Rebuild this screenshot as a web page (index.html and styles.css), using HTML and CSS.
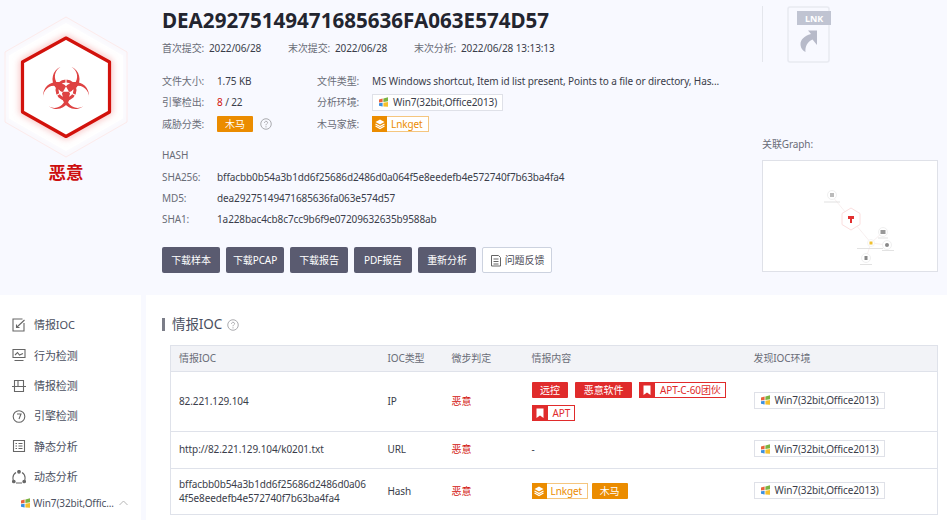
FILE: index.html
```html
<!DOCTYPE html>
<html lang="zh-CN">
<head>
<meta charset="utf-8">
<title>恶意文件分析报告</title>
<link rel="stylesheet" href="styles.css">
</head>
<body>
<svg class="defs" width="0" height="0" aria-hidden="true">
  <defs>
    <g id="win">
      <path d="M1 3.5 4.600 2.600 4.600 6 1 6.600Z" fill="#e8643c"/>
      <path d="M5.400 2.400 10 1.200 10 5.200 5.400 5.900Z" fill="#7cb342"/>
      <path d="M1 7.300 4.600 6.800 4.600 10.400 1 9.800Z" fill="#3b8fe0"/>
      <path d="M5.400 6.700 10 6.100 10 10.800 5.400 10.500Z" fill="#f5c02c"/>
    </g>
    <g id="stack">
      <path d="M6 1.500 10.500 4 6 6.500 1.500 4Z" fill="#fff"/>
      <path d="M1.500 6 6 8.500 10.500 6M1.500 8 6 10.500 10.500 8" fill="none" stroke="#fff" stroke-width="1.100"/>
    </g>
    <path id="flag" d="M2.500 1.500H9.500V11L6 8.600 2.500 11Z" fill="#fff"/>
    <g id="help">
      <circle cx="6.500" cy="6.500" r="5.700" fill="none" stroke="#a4a4a8" stroke-width="1"/>
      <path d="M4.900 5.200C4.900 3 8.200 3 8.200 5.100 8.200 6.300 6.500 6.300 6.500 7.900" fill="none" stroke="#a4a4a8" stroke-width="1"/>
      <circle cx="6.500" cy="9.600" r=".7" fill="#a4a4a8"/>
    </g>
  </defs>
</svg>

<section class="hero">
  <div class="verdict">
    <svg class="verdict-mark" width="132" height="160" viewBox="0 0 132 160" aria-hidden="true">
      <defs>
        <filter id="glow" x="-30%" y="-30%" width="160%" height="160%">
          <feGaussianBlur stdDeviation="3.500"/>
        </filter>
        <filter id="soft" x="-30%" y="-30%" width="160%" height="160%">
          <feGaussianBlur stdDeviation="3"/>
        </filter>
        <path id="lobe" d="M-5.300 -23.300A13.500 13.500 0 1 0 5.300 -23.300A11.100 11.100 0 1 1 -5.300 -23.300Z"/>
      </defs>
      <path d="M66 17 127 52V122L66 157 5 122V52Z" fill="#f9f8fd" stroke="#fdeaea" stroke-width="1" stroke-linejoin="round"/>
      <path d="M66 24 122 56V118L66 150 10 118V56Z" fill="#fff" stroke="#fff" stroke-width="2" stroke-linejoin="round" filter="url(#soft)"/>
      <path d="M66 24 122 56V118L66 150 10 118V56Z" fill="#fff" stroke="#fff" stroke-width="2" stroke-linejoin="round"/>
      <path d="M66 38 109.500 62V112L66 136.500 22.500 112V62Z" fill="none" stroke="#f4a3a3" stroke-width="4" stroke-linejoin="round" filter="url(#glow)"/>
      <path d="M66 38 109.500 62V112L66 136.500 22.500 112V62Z" fill="#fff" stroke="#d2120c" stroke-width="3.200" stroke-linejoin="round"/>
      <g transform="translate(66 90)" fill="#de4242">
        <use href="#lobe"/>
        <use href="#lobe" transform="rotate(120)"/>
        <use href="#lobe" transform="rotate(240)"/>
        <g fill="#fff">
          <circle cy="-14.500" r="9.300"/>
          <circle cy="-14.500" r="9.300" transform="rotate(120)"/>
          <circle cy="-14.500" r="9.300" transform="rotate(240)"/>
        </g>
        <circle r="9" fill="none" stroke="#de4242" stroke-width="3"/>
        <path d="M0 2V14M-1.700 -1-12.100 -7M1.700 -1 12.100 -7" stroke="#de4242" stroke-width="3.600"/>
        <path d="M0 -3.500 3 1.800H-3Z" fill="#fff"/>
        <path d="M0 -4V-12M3.500 2 10.400 6M-3.500 2-10.400 6" stroke="#fff" stroke-width="1.100"/>
      </g>
    </svg>
    <div class="verdict-label">恶意</div>
  </div>

  <div class="info">
    <h1 class="title">DEA29275149471685636FA063E574D57</h1>
    <div class="dates">
      <span class="date date-a"><span class="label">首次提交:</span><span>2022/06/28</span></span>
      <span class="date date-b"><span class="label">末次提交:</span><span>2022/06/28</span></span>
      <span class="date"><span class="label">末次分析:</span><span>2022/06/28 13:13:13</span></span>
    </div>
    <div class="facts">
      <div class="fact-row">
        <div class="fact-left"><span class="key">文件大小:</span><span>1.75 KB</span></div>
        <div class="fact-right"><span class="key">文件类型:</span><span>MS Windows shortcut, Item id list present, Points to a file or directory, Has...</span></div>
      </div>
      <div class="fact-row">
        <div class="fact-left"><span class="key">引擎检出:</span><span><span class="hit">8</span> / 22</span></div>
        <div class="fact-right"><span class="key">分析环境:</span><span class="env"><svg width="11" height="12" viewBox="0 0 11 12"><use href="#win"/></svg>Win7(32bit,Office2013)</span></div>
      </div>
      <div class="fact-row">
        <div class="fact-left"><span class="key">威胁分类:</span><span class="tag tag-orange tag-wide">木马</span><svg class="help-icon" width="12" height="12" viewBox="0 0 13 13"><use href="#help"/></svg></div>
        <div class="fact-right"><span class="key">木马家族:</span><span class="family"><span class="family-icon"><svg width="12" height="12" viewBox="0 0 12 12"><use href="#stack"/></svg></span><span class="family-name">Lnkget</span></span></div>
      </div>
    </div>
    <div class="hash-block">
      <div class="hash-title">HASH</div>
      <div class="hash-row"><span class="hash-key">SHA256:</span><span>bffacbb0b54a3b1dd6f25686d2486d0a064f5e8eedefb4e572740f7b63ba4fa4</span></div>
      <div class="hash-row"><span class="hash-key">MD5:</span><span>dea29275149471685636fa063e574d57</span></div>
      <div class="hash-row"><span class="hash-key">SHA1:</span><span>1a228bac4cb8c7cc9b6f9e07209632635b9588ab</span></div>
    </div>
    <div class="actions">
      <button class="btn">下载样本</button>
      <button class="btn">下载PCAP</button>
      <button class="btn">下载报告</button>
      <button class="btn">PDF报告</button>
      <button class="btn">重新分析</button>
      <button class="btn btn-light">
        <svg width="12" height="13" viewBox="0 0 12 13" fill="none" stroke="#666"><path d="M1.500 1.500H8.500L10.500 3.500V12H1.500Z"/><path d="M3.500 5H8.500M3.500 7.500H8.500M3.500 10H8.500"/></svg>问题反馈
      </button>
    </div>
  </div>

  <aside class="side">
    <div class="file-box">
      <svg width="46" height="57" viewBox="0 0 46 57" aria-hidden="true">
        <rect x="1" y="1" width="41" height="55" rx="2" fill="none" stroke="#e8eaf1" stroke-width="1.500"/>
        <rect x="10" y="5" width="34" height="14" fill="#c0c4d2"/>
        <text class="file-ext" x="27" y="15.500" text-anchor="middle">LNK</text>
        <path d="M30 24.500H21L24 28C17 30 13.500 34 13.500 38 13.500 41 15 44.500 18.500 46 18 41 20 36 25.500 33.500L30 39Z" fill="#b7bac9"/>
      </svg>
    </div>
    <div class="graph-title">关联Graph:</div>
    <div class="graph">
      <svg width="176" height="112" viewBox="0 0 176 112" aria-hidden="true">
        <path d="M70 36 89 59 109 83 121 72M109 83 125 85M109 83 104 98" fill="none" stroke="#f3e8e8" stroke-width=".7"/>
        <path d="M89 48 98 53.500V64.500L89 70 80 64.500V53.500Z" fill="#fff" stroke="#fbdede" stroke-width="1"/>
        <path d="M86 56H92V59H90V63H88V59H86Z" fill="#e23030"/>
        <circle cx="70" cy="35" r="4.500" fill="#fff" stroke="#f0f0f0"/>
        <rect x="68" y="33" width="4" height="4" fill="#bbb"/>
        <rect x="62" y="41.500" width="16" height="1" fill="#e2e2e2"/>
        <circle cx="121" cy="72" r="4.500" fill="#fff" stroke="#f0f0f0"/>
        <rect x="118.500" y="70" width="5" height="4" fill="#999"/>
        <rect x="116" y="77.500" width="10" height="1" fill="#e2e2e2"/>
        <circle cx="109" cy="83" r="3.500" fill="#fff" stroke="#f4f4f4"/>
        <rect x="107.500" y="81.500" width="3" height="3" fill="#f0c030"/>
        <rect x="95" y="88" width="26" height="1" fill="#e2e2e2"/>
        <circle cx="125" cy="85" r="4.500" fill="#fff" stroke="#f0f0f0"/>
        <circle cx="125" cy="85" r="2" fill="#888"/>
        <rect x="120" y="90" width="12" height="1" fill="#e2e2e2"/>
        <circle cx="104" cy="98" r="4.500" fill="#fff" stroke="#f0f0f0"/>
        <rect x="102.500" y="96" width="3" height="4" fill="#888"/>
        <rect x="98" y="104" width="12" height="1" fill="#e2e2e2"/>
      </svg>
    </div>
  </aside>
</section>

<section class="lower">
  <nav class="nav">
    <a class="nav-item"><svg width="14" height="14" viewBox="0 0 14 14" fill="none" stroke="#666" stroke-width="1.100"><path d="M10.500 1H1V13H12V5"/><path d="M5 9 12.500 2M4.500 6.500V9.500H7.500"/></svg>情报IOC</a>
    <a class="nav-item"><svg width="14" height="14" viewBox="0 0 14 14" fill="none" stroke="#666" stroke-width="1.100"><path d="M1 1.500H13V9.500H1ZM2.500 12.500H11.500M3 7 5.500 4.500 7.500 7 11 5.500"/></svg>行为检测</a>
    <a class="nav-item"><svg width="14" height="14" viewBox="0 0 14 14" fill="none" stroke="#666" stroke-width="1.100"><path d="M2.500 1.500H11.500V12.500H2.500ZM0 7.500H14M6 1.500V7.500"/></svg>情报检测</a>
    <a class="nav-item"><svg width="14" height="14" viewBox="0 0 14 14" fill="none" stroke="#666" stroke-width="1.100"><circle cx="7" cy="7.500" r="5.800"/><path d="M5 5H9L7 10"/></svg>引擎检测</a>
    <a class="nav-item"><svg width="14" height="14" viewBox="0 0 14 14" fill="none" stroke="#666" stroke-width="1.100"><path d="M1.500 1.500H12.500V12.500H1.500ZM3.500 4.500H5M6.500 4.500H10.500M3.500 7H5M6.500 7H10.500M3.500 9.500H5M6.500 9.500H10.500"/></svg>静态分析</a>
    <a class="nav-item"><svg width="14" height="14" viewBox="0 0 14 14" fill="none" stroke="#666" stroke-width="1.100"><path d="M4 2.500C1.500 4 .5 7 1.200 10M4 13H10M10 2.500C12.500 4 13.500 7 12.800 10"/><circle cx="7" cy="1.800" r="1.300" fill="#666"/><circle cx="1.800" cy="11.500" r="1.300" fill="#666"/><circle cx="12.200" cy="11.500" r="1.300" fill="#666"/></svg>动态分析</a>
    <a class="nav-sub"><svg width="11" height="12" viewBox="0 0 11 12"><use href="#win"/></svg><span class="nav-sub-text">Win7(32bit,Offic...</span><svg class="chev" width="9" height="6" viewBox="0 0 9 6" fill="none" stroke="#b5b5b5"><path d="M.5 5 4.500 1 8.500 5"/></svg></a>
  </nav>

  <main class="content">
    <h2 class="section-title"><span class="section-bar"></span>情报IOC<svg class="section-help" width="12" height="12" viewBox="0 0 13 13"><use href="#help"/></svg></h2>
    <table class="ioc">
      <colgroup>
        <col class="col-ioc"><col class="col-type"><col class="col-judge"><col class="col-content"><col class="col-env">
      </colgroup>
      <thead>
        <tr><th>情报IOC</th><th>IOC类型</th><th>微步判定</th><th>情报内容</th><th>发现IOC环境</th></tr>
      </thead>
      <tbody>
        <tr class="row-ip">
          <td>82.221.129.104</td>
          <td>IP</td>
          <td class="bad">恶意</td>
          <td>
            <div class="tags">
              <span class="tag tag-red">远控</span>
              <span class="tag tag-red">恶意软件</span>
              <span class="gang"><span class="gang-icon"><svg width="12" height="12" viewBox="0 0 12 12"><use href="#flag"/></svg></span><span class="gang-name">APT-C-60团伙</span></span>
              <span class="gang"><span class="gang-icon"><svg width="12" height="12" viewBox="0 0 12 12"><use href="#flag"/></svg></span><span class="gang-name">APT</span></span>
            </div>
          </td>
          <td><span class="env"><svg width="11" height="12" viewBox="0 0 11 12"><use href="#win"/></svg>Win7(32bit,Office2013)</span></td>
        </tr>
        <tr class="row-url">
          <td>http://82.221.129.104/k0201.txt</td>
          <td>URL</td>
          <td class="bad">恶意</td>
          <td>-</td>
          <td><span class="env"><svg width="11" height="12" viewBox="0 0 11 12"><use href="#win"/></svg>Win7(32bit,Office2013)</span></td>
        </tr>
        <tr class="row-hash">
          <td class="hash-cell">bffacbb0b54a3b1dd6f25686d2486d0a064f5e8eedefb4e572740f7b63ba4fa4</td>
          <td>Hash</td>
          <td class="bad">恶意</td>
          <td>
            <div class="tags tags-tight">
              <span class="family"><span class="family-icon"><svg width="12" height="12" viewBox="0 0 12 12"><use href="#stack"/></svg></span><span class="family-name">Lnkget</span></span>
              <span class="tag tag-orange tag-wide">木马</span>
            </div>
          </td>
          <td><span class="env"><svg width="11" height="12" viewBox="0 0 11 12"><use href="#win"/></svg>Win7(32bit,Office2013)</span></td>
        </tr>
      </tbody>
    </table>
  </main>
</section>
</body>
</html>
```

FILE: styles.css
```css
* { box-sizing: border-box; }
html, body { margin: 0; height: 520px; overflow: hidden; }
body {
  background: #f8f9ff;
  color: #3a3d4a;
  font: 10px/1.4 "Noto Sans", "Noto Sans CJK SC", sans-serif;
  letter-spacing: -0.1px;
}
.defs { position: absolute; }
svg { display: block; flex: none; }

.hero { display: flex; height: 295px; }
.verdict { width: 162px; flex: none; display: flex; flex-direction: column; }
.verdict-label {
  width: 132px;
  text-align: center;
  color: #cc0f0f;
  font-size: 17.5px;
  font-weight: 700;
  line-height: 24px;
}

.info { width: 600px; flex: none; }
.title {
  margin: 0;
  height: 38px;
  line-height: 40px;
  font-size: 20.6px;
  font-weight: 700;
  letter-spacing: 0;
  color: #23252f;
  white-space: nowrap;
}
.dates { display: flex; height: 20px; align-items: center; }
.date { display: flex; }
.date-a, .date-b { width: 126px; }
.label { width: 47px; flex: none; }
.label, .key, .hash-title, .hash-key { color: #6a6d78; }

.facts { margin-top: 12px; }
.fact-row { display: flex; height: 21.5px; align-items: center; }
.fact-left { width: 155px; display: flex; align-items: center; }
.fact-right { display: flex; align-items: center; white-space: nowrap; }
.key { width: 55px; flex: none; }
.hit { color: #d2120c; }
.help-icon { margin-left: 7px; }

.tag {
  display: inline-block;
  height: 16px;
  line-height: 16px;
  border-radius: 1px;
  color: #fff;
  white-space: nowrap;
}
.tag-orange { background: #eb8c00; }
.tag-wide { width: 36px; text-align: center; }
.tag-red { background: #e02b2b; padding: 0 8.5px; }

.env {
  display: inline-flex;
  align-items: center;
  gap: 4px;
  height: 17px;
  padding: 0 5px;
  background: #fff;
  border: 1px solid #dfe1e8;
  white-space: nowrap;
}

.family { display: inline-flex; height: 16px; white-space: nowrap; }
.family-icon {
  width: 15px;
  background: #eb8c00;
  display: flex;
  align-items: center;
  justify-content: center;
}
.family-name {
  color: #eb8c00;
  border: 1px solid #f5c67f;
  border-left: 0;
  padding: 0 5px 0 4px;
  line-height: 14px;
  background: #fff;
}

.hash-block { margin-top: 10px; }
.hash-title { height: 22px; line-height: 20px; }
.hash-row { display: flex; height: 21px; line-height: 21px; white-space: nowrap; }
.hash-key { width: 55px; flex: none; }

.actions { display: flex; gap: 6px; margin-top: 17.5px; }
.btn {
  width: 58px;
  height: 26px;
  padding: 0;
  border: 0;
  border-radius: 2px;
  background: #5a5b70;
  color: #fff;
  font: inherit;
  letter-spacing: inherit;
  line-height: 26px;
}
.btn-light {
  width: 70px;
  display: flex;
  align-items: center;
  justify-content: center;
  gap: 3px;
  background: #fff;
  color: #4a4a55;
  border: 1px solid #ccd2df;
}

.side { width: 176px; flex: none; }
.file-box {
  height: 56px;
  margin-top: 6px;
  padding-left: 24px;
  border-left: 1px solid #e4e6ec;
}
.file-ext { font: 700 9px "Noto Sans", sans-serif; fill: #fff; }
.graph-title { margin-top: 72px; height: 20px; line-height: 20px; color: #6a6d78; }
.graph { margin-top: 6px; height: 112px; background: #fff; outline: 1px solid #dfe1e8; outline-offset: -1px; }

.lower { display: flex; height: 225px; }
.nav { width: 141px; flex: none; background: #fff; padding-top: 15px; }
.nav-item {
  display: flex;
  align-items: center;
  gap: 8px;
  height: 30.3px;
  padding-left: 12px;
  color: #4b5060;
  font-size: 11px;
}
.nav-sub {
  display: flex;
  align-items: center;
  margin-top: 1px;
  height: 20px;
  padding-left: 20px;
  gap: 2px;
  color: #4b5060;
}
.chev { margin-left: 3px; }

.content { flex: 1; margin-left: 5px; background: #fff; padding: 21px 9px 0 16px; }
.section-title {
  display: flex;
  align-items: center;
  margin: 0 0 12px;
  height: 17px;
  font-size: 13.5px;
  font-weight: 400;
  color: #4b5060;
}
.section-bar { width: 3px; height: 13px; background: #7b7d88; margin-right: 7px; }
.section-help { margin-left: 5px; }

.ioc {
  width: 767px;
  margin-left: 8px;
  table-layout: fixed;
  border-collapse: collapse;
  border: 1px solid #dfe2ea;
}
.col-ioc { width: 209px; }
.col-type { width: 64px; }
.col-judge { width: 80px; }
.col-content { width: 222px; }
.col-env { width: 192px; }
.ioc th {
  height: 26px;
  padding: 0 8px 2px;
  background: #f2f3f7;
  color: #6a6d78;
  font-weight: 400;
  text-align: left;
  border-bottom: 1px solid #dfe2ea;
}
.ioc td { padding: 0 8px 2px; border-bottom: 1px solid #dfe2ea; vertical-align: middle; }
.row-ip { height: 60px; }
.row-url { height: 37px; }
.row-hash { height: 46px; }
.ioc .hash-cell { word-break: break-all; line-height: 13.5px; padding: 0 12px 0 8px; }
.bad { color: #d2120c; }
.tags { display: flex; flex-wrap: wrap; gap: 7px; }
.row-ip .tags { margin-top: 2px; }
.tags-tight { gap: 3.5px; }
.gang { display: inline-flex; height: 16px; white-space: nowrap; }
.gang-icon {
  width: 16px;
  background: #e02b2b;
  display: flex;
  align-items: center;
  justify-content: center;
}
.gang-name {
  color: #e02b2b;
  border: 1px solid #e02b2b;
  border-left: 0;
  padding: 0 4px 0 5px;
  line-height: 14px;
  background: #fff;
}
```
